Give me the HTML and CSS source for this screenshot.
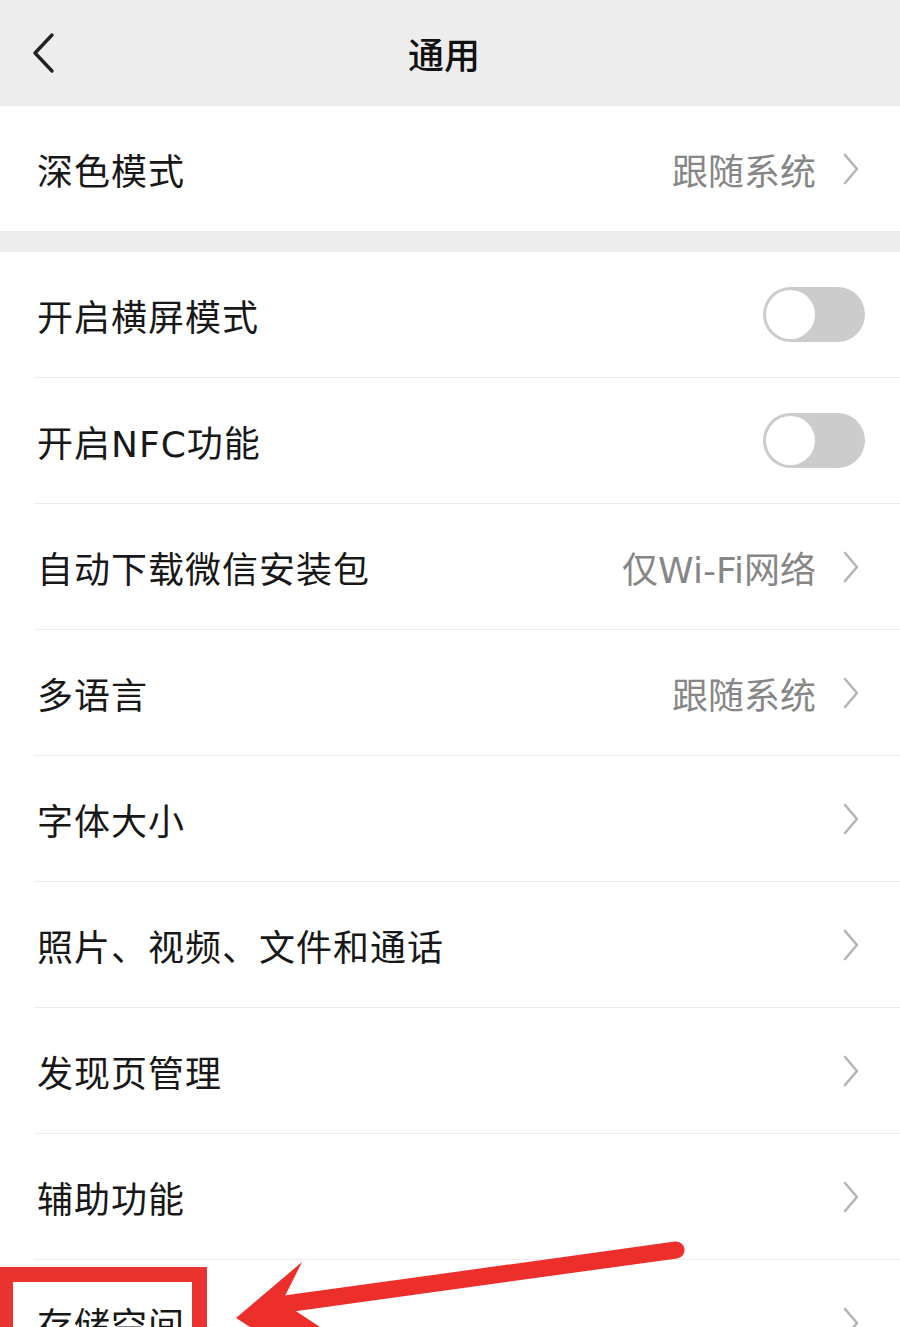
FILE: index.html
```html
<!DOCTYPE html>
<html lang="zh-CN">
<head>
    <meta charset="UTF-8">
    <meta name="viewport" content="width=device-width, initial-scale=1.0">
    <title>通用</title>
    <link rel="stylesheet" href="styles.css">
</head>
<body>
    <div class="page">
        <header class="topbar">
            <svg class="back" width="26" height="42" viewBox="0 0 26 42">
                <path d="M22 3 L5 21 L22 39" fill="none" stroke="#222" stroke-width="3.4" stroke-linecap="round" stroke-linejoin="round"/>
            </svg>
            <h1 class="title">通用</h1>
        </header>

        <!-- 深色模式 -->
        <section class="group">
            <div class="row">
                <span class="label">深色模式</span>
                <span class="value">跟随系统</span>
                <svg class="arrow" width="18" height="32" viewBox="0 0 18 32"><path d="M3 2 L15 16 L3 30" fill="none" stroke="#b5b5b5" stroke-width="2.6" stroke-linecap="round" stroke-linejoin="round"/></svg>
            </div>
        </section>

        <section class="group">
            <div class="row">
                <span class="label">开启横屏模式</span>
                <span class="switch"><span class="knob"></span></span>
            </div>
            <div class="row">
                <span class="label">开启NFC功能</span>
                <span class="switch"><span class="knob"></span></span>
            </div>
            <div class="row">
                <span class="label">自动下载微信安装包</span>
                <span class="value">仅Wi-Fi网络</span>
                <svg class="arrow" width="18" height="32" viewBox="0 0 18 32"><path d="M3 2 L15 16 L3 30" fill="none" stroke="#b5b5b5" stroke-width="2.6" stroke-linecap="round" stroke-linejoin="round"/></svg>
            </div>
            <div class="row">
                <span class="label">多语言</span>
                <span class="value">跟随系统</span>
                <svg class="arrow" width="18" height="32" viewBox="0 0 18 32"><path d="M3 2 L15 16 L3 30" fill="none" stroke="#b5b5b5" stroke-width="2.6" stroke-linecap="round" stroke-linejoin="round"/></svg>
            </div>
            <div class="row">
                <span class="label">字体大小</span>
                <svg class="arrow" width="18" height="32" viewBox="0 0 18 32"><path d="M3 2 L15 16 L3 30" fill="none" stroke="#b5b5b5" stroke-width="2.6" stroke-linecap="round" stroke-linejoin="round"/></svg>
            </div>
            <div class="row">
                <span class="label">照片、视频、文件和通话</span>
                <svg class="arrow" width="18" height="32" viewBox="0 0 18 32"><path d="M3 2 L15 16 L3 30" fill="none" stroke="#b5b5b5" stroke-width="2.6" stroke-linecap="round" stroke-linejoin="round"/></svg>
            </div>
            <div class="row">
                <span class="label">发现页管理</span>
                <svg class="arrow" width="18" height="32" viewBox="0 0 18 32"><path d="M3 2 L15 16 L3 30" fill="none" stroke="#b5b5b5" stroke-width="2.6" stroke-linecap="round" stroke-linejoin="round"/></svg>
            </div>
            <div class="row">
                <span class="label">辅助功能</span>
                <svg class="arrow" width="18" height="32" viewBox="0 0 18 32"><path d="M3 2 L15 16 L3 30" fill="none" stroke="#b5b5b5" stroke-width="2.6" stroke-linecap="round" stroke-linejoin="round"/></svg>
            </div>
            <div class="row">
                <span class="label">存储空间</span>
                <svg class="arrow" width="18" height="32" viewBox="0 0 18 32"><path d="M3 2 L15 16 L3 30" fill="none" stroke="#b5b5b5" stroke-width="2.6" stroke-linecap="round" stroke-linejoin="round"/></svg>
            </div>
        </section>

        <!-- red annotation -->
        <div class="mark-box"></div>
        <svg class="mark-arrow" width="900" height="140" viewBox="0 1200 900 140">
            <path d="M676 1250 L278 1305" fill="none" stroke="#ec2f2b" stroke-width="17" stroke-linecap="round"/>
            <path d="M236 1318 L302 1262 L282 1302 L320 1327 L250 1327 Z" fill="#ec2f2b"/>
        </svg>
    </div>
</body>
</html>
```

FILE: styles.css
```css
html, body {
    margin: 0;
    padding: 0;
}
body {
    font-family: "DejaVu Sans", "Noto Sans CJK SC", sans-serif;
    background: #ededed;
    color: #181818;
}
.page {
    position: relative;
    width: 900px;
    height: 1327px;
    overflow: hidden;
}
.topbar {
    height: 106px;
    display: flex;
    align-items: center;
    justify-content: center;
    position: relative;
    background: #ededed;
    padding-right: 12px;
    box-sizing: border-box;
}
.back {
    position: absolute;
    left: 30px;
    top: 32px;
}
.title {
    margin: 0;
    font-size: 36px;
    font-weight: 500;
    color: #111;
}
.group {
    background: #fff;
    margin-bottom: 21px;
}
.row {
    height: 125px;
    display: flex;
    align-items: center;
    padding: 0 40px 0 37px;
    position: relative;
}
.row + .row::before {
    content: "";
    position: absolute;
    left: 34px;
    right: 0;
    top: -1px;
    height: 1px;
    background: #ebebeb;
}
.row + .row {
    margin-top: 1px;
}
.label {
    flex: 1;
    font-size: 36px;
    letter-spacing: 1px;
}
.value {
    font-size: 36px;
    color: #868686;
    margin-right: 26px;
}
.arrow {
    display: block;
}
.switch {
    width: 102px;
    height: 55px;
    border-radius: 28px;
    background: #cccccc;
    position: relative;
    margin-right: -5px;
}
.knob {
    position: absolute;
    left: 3px;
    top: 3px;
    width: 49px;
    height: 49px;
    border-radius: 50%;
    background: #fff;
}
.mark-box {
    position: absolute;
    left: -2px;
    top: 1267px;
    width: 179px;
    height: 80px;
    border: 15px solid #ea3430;
}
.mark-arrow {
    position: absolute;
    left: 0;
    top: 1200px;
}
```
